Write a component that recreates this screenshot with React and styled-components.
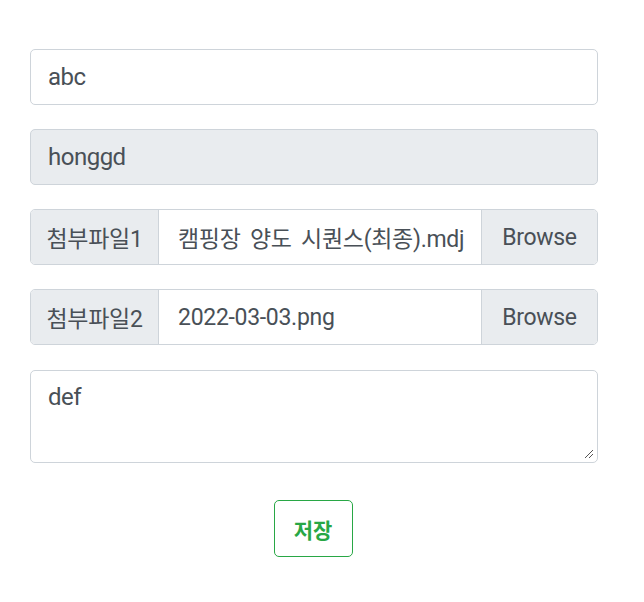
import React from "react";
import styled, { createGlobalStyle } from "styled-components";

const GlobalStyle = createGlobalStyle`
  body {
    margin: 0;
    background: #fff;
    font-family: Roboto, "Noto Sans CJK KR", sans-serif;
    color: #495057;
  }
  * { box-sizing: border-box; }
`;

const Form = styled.div`
  width: 568px;
  margin: 49px 0 0 30px;
  display: flex;
  flex-direction: column;
  gap: 24px;
`;

const TextInput = styled.div`
  height: 56px;
  border: 1px solid #ced4da;
  border-radius: 5px;
  background: ${(p) => (p.disabled ? "#e9ecef" : "#fff")};
  padding: 0 17px;
  display: flex;
  align-items: center;
  font-size: 24px;
  letter-spacing: -0.5px;
`;

const Group = styled.div`
  height: 56px;
  display: flex;
  border: 1px solid #ced4da;
  border-radius: 5px;
  overflow: hidden;
  font-size: 23px;
  letter-spacing: -0.3px;
`;

const Addon = styled.div`
  width: 128px;
  flex: none;
  background: #e9ecef;
  border-right: 1px solid #ced4da;
  display: flex;
  align-items: center;
  justify-content: center;
`;

const FileName = styled.div`
  flex: 1;
  padding: 0 19px;
  display: flex;
  align-items: center;
  white-space: nowrap;
  overflow: hidden;
  word-spacing: 4px;
`;

const BrowseButton = styled.div`
  width: 116px;
  flex: none;
  background: #e9ecef;
  border-left: 1px solid #ced4da;
  display: flex;
  align-items: center;
  justify-content: center;
`;

const TextArea = styled.div`
  position: relative;
  height: 93px;
  margin-top: 1px;
  border: 1px solid #ced4da;
  border-radius: 5px;
  padding: 12px 17px;
  font-size: 24px;
  letter-spacing: -0.5px;
`;

const Grip = styled.svg`
  position: absolute;
  right: 3px;
  bottom: 3px;
`;

const Actions = styled.div`
  display: flex;
  justify-content: center;
  padding-top: 13px;
  margin-left: -2px;
`;

const SaveButton = styled.button`
  width: 79px;
  height: 57px;
  border: 1px solid #28a745;
  border-radius: 5px;
  background: #fff;
  color: #28a745;
  font-family: "Noto Sans CJK KR", sans-serif;
  font-weight: 700;
  font-size: 21px;
`;

export default function App() {
  return (
    <>
      <GlobalStyle />
      <Form>
        <TextInput>abc</TextInput>
        <TextInput disabled>honggd</TextInput>
        <Group>
          <Addon>첨부파일1</Addon>
          <FileName>캠핑장 양도 시퀀스(최종).mdj</FileName>
          <BrowseButton>Browse</BrowseButton>
        </Group>
        <Group>
          <Addon>첨부파일2</Addon>
          <FileName>2022-03-03.png</FileName>
          <BrowseButton>Browse</BrowseButton>
        </Group>
        <TextArea>
          def
          <Grip width="12" height="12" viewBox="0 0 12 12">
            <path d="M11 3 L3 11 M11 7 L7 11" stroke="#555" strokeWidth="1" fill="none" />
          </Grip>
        </TextArea>
        <Actions>
          <SaveButton>저장</SaveButton>
        </Actions>
      </Form>
    </>
  );
}
